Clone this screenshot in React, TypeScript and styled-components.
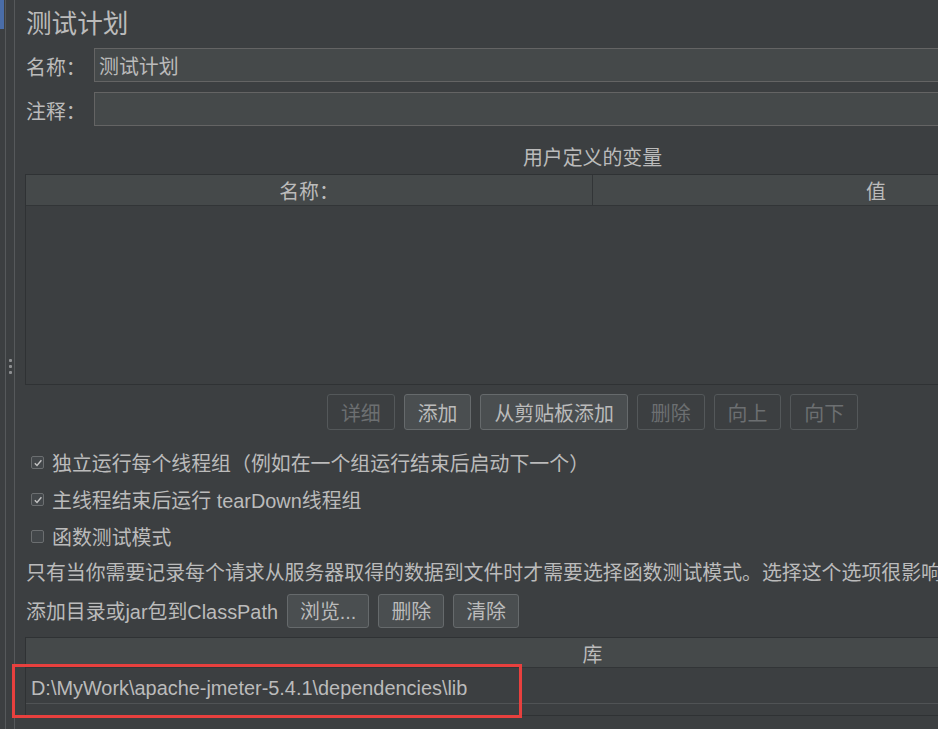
import React from "react";
import styled, { createGlobalStyle } from "styled-components";

const Global = createGlobalStyle`
  html, body { margin: 0; padding: 0; background: #3c3f41; overflow: hidden; }
  body { font-family: "Liberation Sans", "Noto Sans CJK SC", sans-serif; color: #bbbbbb; }
  * { box-sizing: border-box; }
`;

const Page = styled.div`
  display: flex;
  width: 938px;
  height: 729px;
  overflow: hidden;
  background: #3c3f41;
`;

const Sidebar = styled.div`
  flex: none;
  display: flex;
  width: 15px;
  height: 100%;
`;

const Gutter = styled.div`
  width: 5px;
  height: 100%;
  display: flex;
  flex-direction: column;
`;

const ActiveMark = styled.div`
  width: 4px;
  height: 29px;
  background: #4a6da8;
`;

const VLine = styled.div`
  width: 1px;
  height: 100%;
  background: #56595b;
`;

const Splitter = styled.div`
  width: 8px;
  height: 100%;
  display: flex;
  flex-direction: column;
  align-items: center;
  justify-content: center;
  gap: 3px;
  padding-top: 3px;
`;

const Dot = styled.span`
  width: 3px;
  height: 3px;
  border-radius: 1px;
  background: #8e9092;
`;

const Main = styled.div`
  flex: none;
  width: 1145px;
  padding-left: 10px;
  display: flex;
  flex-direction: column;
  font-size: 19.9px;
`;

const Title = styled.div`
  height: 44px;
  padding-top: 4px;
  line-height: 40px;
  font-size: 25.6px;
  padding-left: 1px;
`;

const FieldRow = styled.div<{ $mt: number }>`
  display: flex;
  align-items: center;
  margin-top: ${(p) => p.$mt}px;
  height: 34px;
`;

const Label = styled.div`
  width: 69px;
  padding-left: 1px;
  padding-top: 3px;
  white-space: nowrap;
`;

const TextField = styled.div`
  flex: 1;
  height: 34px;
  background: #45494a;
  border: 1px solid #646464;
  padding: 4px 0 0 4px;
  line-height: 28px;
  white-space: nowrap;
`;

const Caption = styled.div`
  margin-top: 20px;
  height: 24px;
  line-height: 24px;
  text-align: center;
  margin-bottom: 4px;
`;

const Table = styled.div<{ $height: number }>`
  position: relative;
  height: ${(p) => p.$height}px;
  border: 1px solid #2f3234;
  display: flex;
  flex-direction: column;
`;

const HeaderRow = styled.div<{ $h: number }>`
  display: grid;
  grid-template-columns: 567px 1fr;
  height: ${(p) => p.$h}px;
  background: #45494a;
  border-bottom: 1px solid #323537;
`;

const HeaderSingle = styled.div<{ $h: number }>`
  height: ${(p) => p.$h}px;
  background: #45494a;
  border-bottom: 1px solid #323537;
  display: flex;
  align-items: center;
  justify-content: center;
  padding-top: 1px;
`;

const HeaderCell = styled.div<{ $divider?: boolean }>`
  display: flex;
  align-items: center;
  justify-content: center;
  border-right: ${(p) => (p.$divider ? "1px solid #323537" : "none")};
`;

const DataRow = styled.div`
  height: 36px;
  border-bottom: 1px solid #505355;
  display: flex;
  align-items: center;
  padding: 5px 0 0 5px;
  white-space: nowrap;
`;

const ButtonBar = styled.div`
  display: flex;
  justify-content: center;
  gap: 9px;
  margin-top: 9px;
  height: 36px;
`;

const Button = styled.div<{ $disabled?: boolean }>`
  height: 36px;
  padding: 0 13px;
  display: flex;
  align-items: center;
  justify-content: center;
  border-radius: 3px;
  white-space: nowrap;
  border: 1px solid ${(p) => (p.$disabled ? "#54585a" : "#666a6c")};
  background: ${(p) => (p.$disabled ? "#3c3f41" : "#4a4e50")};
  color: ${(p) => (p.$disabled ? "#6c6f71" : "#bbbbbb")};
`;

const CheckRow = styled.div<{ $mt?: number }>`
  display: flex;
  align-items: center;
  height: 37px;
  margin-top: ${(p) => p.$mt ?? 0}px;
  padding-left: 6px;
  white-space: nowrap;
`;

const Box = styled.span`
  width: 13px;
  height: 13px;
  border: 1px solid #6b6e70;
  border-radius: 2px;
  background: #43474a;
  margin-right: 8px;
  display: flex;
  align-items: center;
  justify-content: center;
  flex: none;
`;

const Note = styled.div`
  height: 37px;
  line-height: 37px;
  padding-left: 1px;
  white-space: nowrap;
`;

const PathRow = styled.div`
  display: flex;
  align-items: center;
  height: 37px;
  gap: 9px;
  padding-left: 1px;
  white-space: nowrap;
`;

const SmallButton = styled(Button)`
  height: 34px;
  padding: 0 12px;
`;

const LibWrap = styled.div`
  position: relative;
  margin-top: 8px;
`;

const Highlight = styled.div`
  position: absolute;
  left: -13px;
  top: 27px;
  width: 510px;
  height: 54px;
  border: 3px solid #e8403e;
  pointer-events: none;
`;

function Check({ checked }: { checked: boolean }) {
  return (
    <Box>
      {checked && (
        <svg width="10" height="10" viewBox="0 0 10 10">
          <path d="M1.8 5.2 L4 7.4 L8.4 2.2" fill="none" stroke="#c4c4c4" strokeWidth="1.4" />
        </svg>
      )}
    </Box>
  );
}

export default function App() {
  return (
    <Page>
      <Global />
      <Sidebar>
        <Gutter>
          <ActiveMark />
        </Gutter>
        <VLine />
        <Splitter>
          <Dot />
          <Dot />
          <Dot />
        </Splitter>
        <VLine />
      </Sidebar>
      <Main>
        <Title>测试计划</Title>
        <FieldRow $mt={4}>
          <Label>名称：</Label>
          <TextField>测试计划</TextField>
        </FieldRow>
        <FieldRow $mt={10}>
          <Label>注释：</Label>
          <TextField />
        </FieldRow>
        <Caption>用户定义的变量</Caption>
        <Table $height={211}>
          <HeaderRow $h={31}>
            <HeaderCell $divider>名称：</HeaderCell>
            <HeaderCell>值</HeaderCell>
          </HeaderRow>
        </Table>
        <ButtonBar>
          <Button $disabled>详细</Button>
          <Button>添加</Button>
          <Button>从剪贴板添加</Button>
          <Button $disabled>删除</Button>
          <Button $disabled>向上</Button>
          <Button $disabled>向下</Button>
        </ButtonBar>
        <CheckRow $mt={14}>
          <Check checked />
          独立运行每个线程组（例如在一个组运行结束后启动下一个）
        </CheckRow>
        <CheckRow>
          <Check checked />
          主线程结束后运行 tearDown线程组
        </CheckRow>
        <CheckRow>
          <Check checked={false} />
          函数测试模式
        </CheckRow>
        <Note>只有当你需要记录每个请求从服务器取得的数据到文件时才需要选择函数测试模式。选择这个选项很影响性能。</Note>
        <PathRow>
          <span>添加目录或jar包到ClassPath</span>
          <SmallButton>浏览...</SmallButton>
          <SmallButton>删除</SmallButton>
          <SmallButton>清除</SmallButton>
        </PathRow>
        <LibWrap>
          <Table $height={79}>
            <HeaderSingle $h={30}>库</HeaderSingle>
            <DataRow>D:\MyWork\apache-jmeter-5.4.1\dependencies\lib</DataRow>
          </Table>
          <Highlight />
        </LibWrap>
      </Main>
    </Page>
  );
}
